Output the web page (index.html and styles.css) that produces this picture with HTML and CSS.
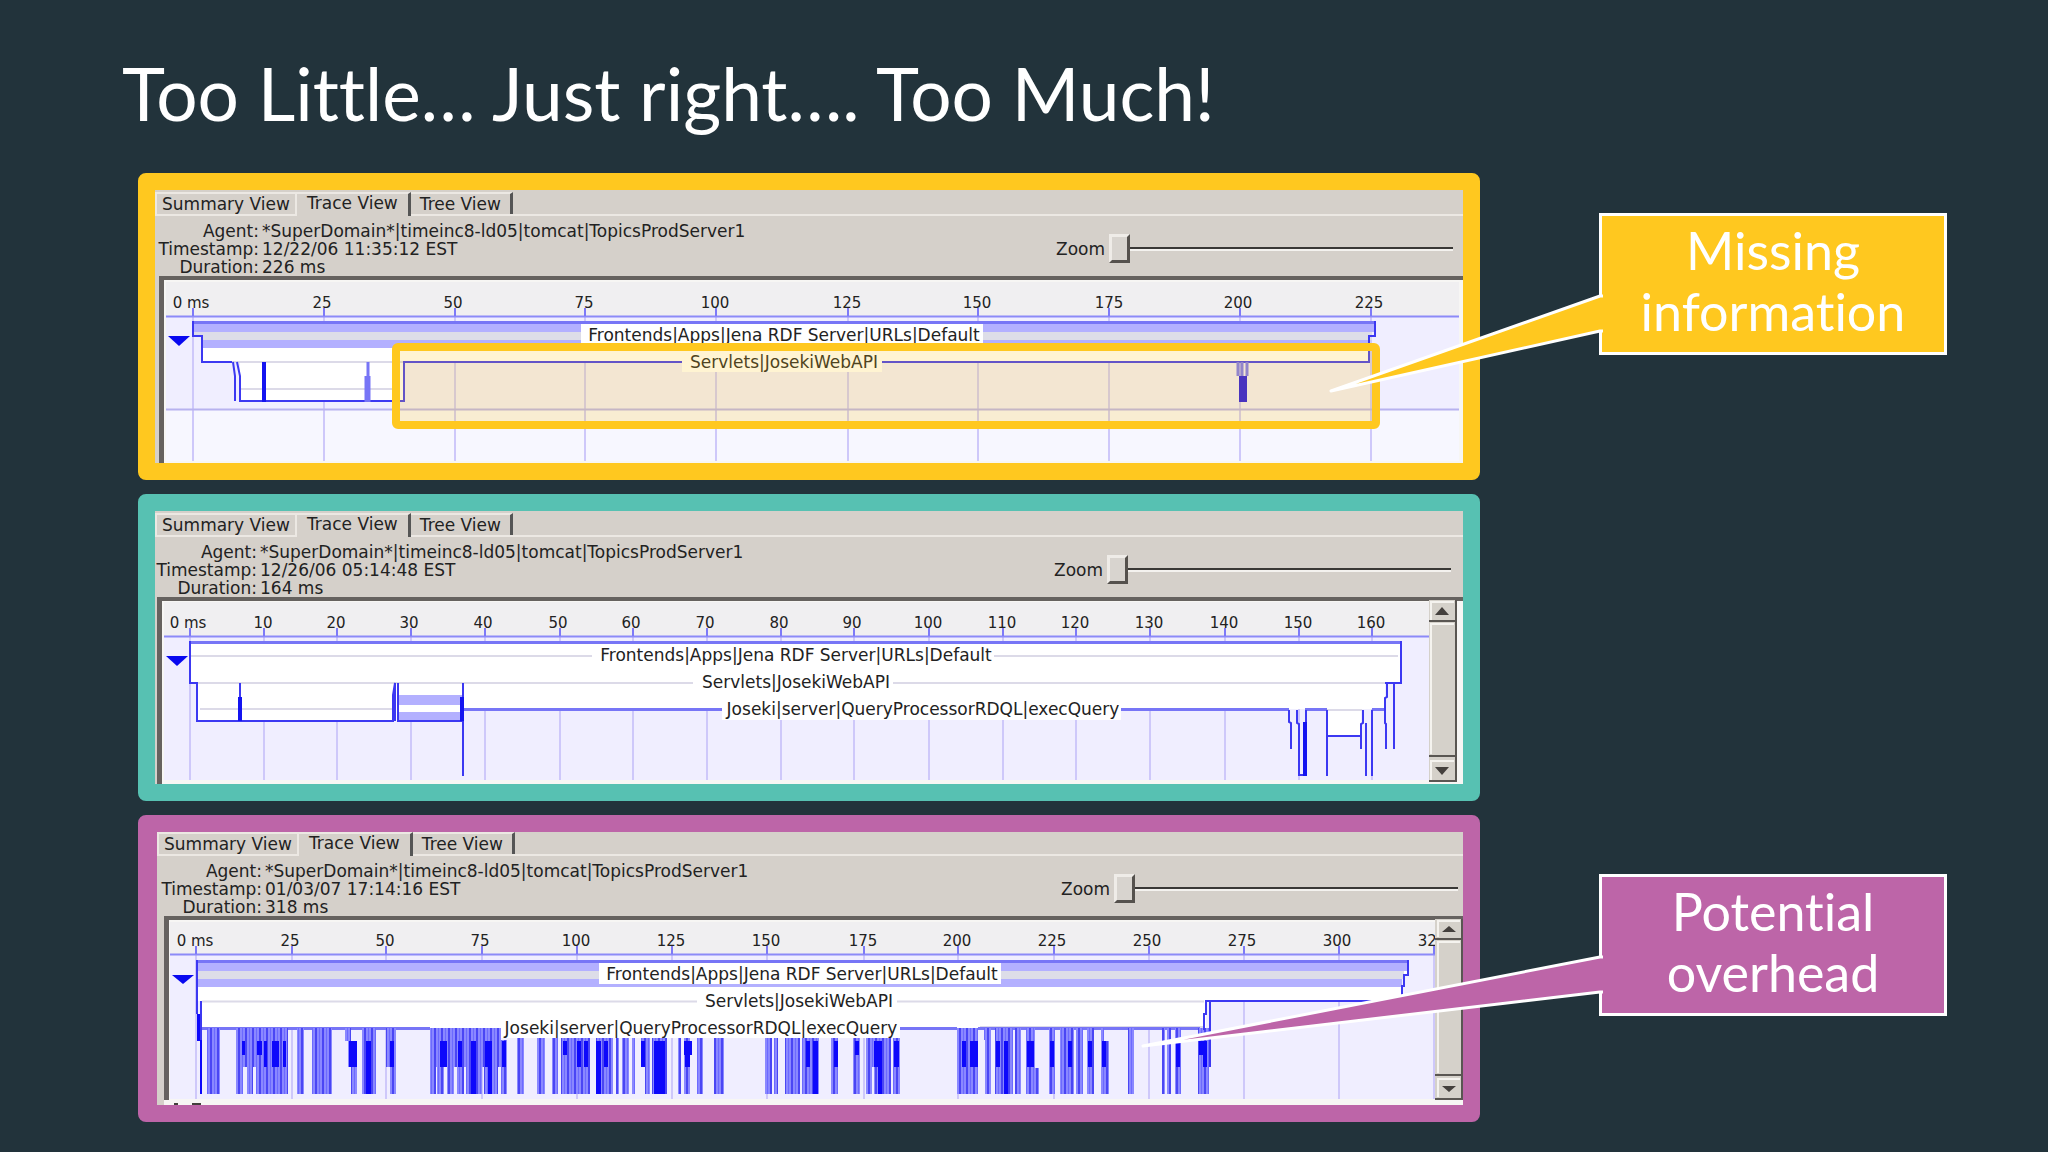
FILE: index.html
```html
<!DOCTYPE html>
<html lang="en">
<head>
<meta charset="utf-8">
<title>Too Little… Just right…. Too Much!</title>
<link rel="stylesheet" href="styles.css">
</head>
<body>
<header class="slide-header"><h1>Too Little… Just right…. Too Much!</h1></header>
<main class="slide">

<section class="panel panel-yellow">
  <div class="tabs" role="tablist">
    <button class="tab" role="tab">Summary View</button>
    <button class="tab tab-active" role="tab" aria-selected="true">Trace View</button>
    <button class="tab tab-last" role="tab">Tree View</button>
  </div>
  <div class="details">
    <dl class="info">
      <dt>Agent:</dt><dd>*SuperDomain*|timeinc8-ld05|tomcat|TopicsProdServer1</dd>
      <dt>Timestamp:</dt><dd>12/22/06 11:35:12 EST</dd>
      <dt>Duration:</dt><dd>226 ms</dd>
    </dl>
    <div class="zoom"><label for="zoom1">Zoom</label><input id="zoom1" type="range" min="0" max="100" value="0"></div>
  </div>
  <svg class="chart" viewBox="159 276 1304 187" role="img" aria-label="Trace with missing information">
    <rect class="shadow" x="159" y="276" width="1304" height="187"/>
    <rect class="edge" x="164" y="280" width="1299" height="183"/>
    <rect class="axis-bg" x="166" y="282" width="1293" height="34"/>
    <rect class="lane" x="166" y="317" width="1293" height="92"/>
    <rect class="below" x="166" y="409" width="1293" height="52"/>
    <path class="grid" d="M193 317V461M324 317V461M455 317V461M585 317V461M716 317V461M848 317V461M978 317V461M1109 317V461M1240 317V461M1371 317V461"/>
    <path class="rule" d="M166 409.500H1459"/>
    <path class="white" d="M202 336H1369V362H404V401H240V362H202z"/>
    <rect class="band" x="193" y="322" width="1182" height="10"/>
    <path class="grey" d="M193 332H1372V340H202V336H193z"/>
    <rect class="band" x="202" y="340" width="1167" height="8"/>
    <path class="faint" d="M240 389H400M202 362H404"/>
    <path class="mid" d="M193 322.500H1375"/>
    <path class="blue" d="M193 321V336H202V362H232M1375 321V336H1369V362H403M404 362V401H240V376L237 362M233 362L235 376V401"/>
    <path class="blue thick" d="M264 362V402"/>
    <path class="mid" d="M368 362V376M366 376V402M369 376V402"/>
    <path class="mid" d="M1238 362V376M1247 362V376M1242 362V376"/>
    <rect class="solid" x="1239" y="376" width="8" height="26"/>
    <path class="axis" d="M166 316.500H1459"/>
    <path class="tick" d="M193 308V316M324 308V316M455 308V316M585 308V316M716 308V316M848 308V316M978 308V316M1109 308V316M1240 308V316M1371 308V316"/>
    <path class="marker" d="M168 336H190L179 346z"/>
    <rect class="white" x="581" y="324" width="402" height="19"/>
    <rect class="white" x="682" y="355" width="200" height="17"/>
    <g class="ticks">
      <text x="191" y="308">0 ms</text><text x="322" y="308">25</text><text x="453" y="308">50</text><text x="584" y="308">75</text><text x="715" y="308">100</text><text x="847" y="308">125</text><text x="977" y="308">150</text><text x="1109" y="308">175</text><text x="1238" y="308">200</text><text x="1369" y="308">225</text>
    </g>
    <g class="labels">
      <text x="784" y="341">Frontends|Apps|Jena RDF Server|URLs|Default</text>
      <text x="784" y="368">Servlets|JosekiWebAPI</text>
    </g>
    <rect class="highlight" x="396" y="347" width="980" height="78" rx="2"/>
  </svg>
</section>

<aside class="callout callout-yellow">
  <svg class="tail" width="284" height="190" viewBox="0 0 284 190" aria-hidden="true"><path d="M284 83H281L12 178L281 118H284"/></svg>
  <p>Missing information</p>
</aside>

<section class="panel panel-teal">
  <div class="tabs" role="tablist">
    <button class="tab" role="tab">Summary View</button>
    <button class="tab tab-active" role="tab" aria-selected="true">Trace View</button>
    <button class="tab tab-last" role="tab">Tree View</button>
  </div>
  <div class="details">
    <dl class="info">
      <dt>Agent:</dt><dd>*SuperDomain*|timeinc8-ld05|tomcat|TopicsProdServer1</dd>
      <dt>Timestamp:</dt><dd>12/26/06 05:14:48 EST</dd>
      <dt>Duration:</dt><dd>164 ms</dd>
    </dl>
    <div class="zoom"><label for="zoom2">Zoom</label><input id="zoom2" type="range" min="0" max="100" value="0"></div>
  </div>
  <svg class="chart" viewBox="157 597 1306 187" role="img" aria-label="Trace with the right level of detail">
    <rect class="shadow" x="157" y="597" width="1306" height="187"/>
    <rect class="edge" x="162" y="601" width="1301" height="183"/>
    <rect class="axis-bg" x="164" y="602" width="1265" height="34"/>
    <rect class="lane" x="164" y="637" width="1265" height="143"/>
    <path class="grid" d="M190 637V780M264 637V780M337 637V780M411 637V780M485 637V780M560 637V780M633 637V780M707 637V780M781 637V780M854 637V780M929 637V780M1003 637V780M1076 637V780M1150 637V780M1225 637V780M1299 637V780M1372 637V780"/>
    <path class="white" d="M190 642H1401V683H1385V709H463V721H197V683H190z"/>
    <rect class="white" x="1327" y="709" width="34" height="27"/>
    <rect class="band" x="398" y="695" width="65" height="10"/>
    <rect class="band" x="398" y="712" width="65" height="8"/>
    <path class="faint" d="M191 656H1398M191 683H1385M200 709H392M1327 710H1362"/>
    <path class="mid" d="M190 642.500H1401M463 709.500H1289M1305 709.500H1327M1372 709.500H1385"/>
    <path class="blue" d="M190 641V683H197V721H393V695L395 683V721M398 683V721H463M240 683V721M463 683V776M1401 641V683H1385M1289 710V722L1291 723V749M1297 710V723L1299 724V775H1306V710M1327 710V776M1327 736H1361M1363 710V723L1361 724V749M1366 723V776M1372 710V776M1387 683V697L1385 698V723L1386 724V749M1394 683V749"/>
    <path class="blue thick" d="M240 697V721M462 697V721M1305 722V776"/>
    <path class="axis" d="M164 636.500H1429"/>
    <path class="tick" d="M190 628V636M264 628V636M337 628V636M411 628V636M485 628V636M560 628V636M633 628V636M707 628V636M781 628V636M854 628V636M929 628V636M1003 628V636M1076 628V636M1150 628V636M1225 628V636M1299 628V636M1372 628V636"/>
    <path class="marker" d="M166 656H188L177 666z"/>
    <rect class="white" x="592" y="647" width="402" height="18"/>
    <rect class="white" x="693" y="675" width="200" height="17"/>
    <rect class="white" x="722" y="700" width="399" height="20"/>
    <g class="ticks">
      <text x="188" y="628">0 ms</text><text x="263" y="628">10</text><text x="336" y="628">20</text><text x="409" y="628">30</text><text x="483" y="628">40</text><text x="558" y="628">50</text><text x="631" y="628">60</text><text x="705" y="628">70</text><text x="779" y="628">80</text><text x="852" y="628">90</text><text x="928" y="628">100</text><text x="1002" y="628">110</text><text x="1075" y="628">120</text><text x="1149" y="628">130</text><text x="1224" y="628">140</text><text x="1298" y="628">150</text><text x="1371" y="628">160</text>
    </g>
    <g class="labels">
      <text x="796" y="661">Frontends|Apps|Jena RDF Server|URLs|Default</text>
      <text x="796" y="688">Servlets|JosekiWebAPI</text>
      <text x="923" y="715">Joseki|server|QueryProcessorRDQL|execQuery</text>
    </g>
    <rect class="face" x="1429" y="600" width="28" height="182"/>
    <path class="bevel-light" d="M1431 620V602H1454M1431 754V624H1454M1431 780V761H1454"/>
    <path class="bevel-dark" d="M1429 621H1455M1429 756H1455M1429 781H1455M1456 600V782"/>
    <path class="arrow" d="M1435 615H1449L1442 607zM1435 767H1449L1442 775z"/>
  </svg>
</section>

<section class="panel panel-purple">
  <div class="tabs" role="tablist">
    <button class="tab" role="tab">Summary View</button>
    <button class="tab tab-active" role="tab" aria-selected="true">Trace View</button>
    <button class="tab tab-last" role="tab">Tree View</button>
  </div>
  <div class="details">
    <dl class="info">
      <dt>Agent:</dt><dd>*SuperDomain*|timeinc8-ld05|tomcat|TopicsProdServer1</dd>
      <dt>Timestamp:</dt><dd>01/03/07 17:14:16 EST</dd>
      <dt>Duration:</dt><dd>318 ms</dd>
    </dl>
    <div class="zoom"><label for="zoom3">Zoom</label><input id="zoom3" type="range" min="0" max="100" value="0"></div>
  </div>
  <svg class="chart" viewBox="164 916 1299 189" role="img" aria-label="Trace with potential overhead">
    <defs>
      <pattern id="calls" width="7" height="8" patternUnits="userSpaceOnUse">
        <rect width="7" height="8" fill="#8a88ff"/><rect width="2" height="8" fill="#4a46f4"/><rect x="4" width="1" height="8" fill="#6c6aff"/>
      </pattern>
    </defs>
    <rect class="shadow" x="164" y="916" width="1299" height="184"/>
    <rect class="edge" x="164" y="1100" width="1299" height="5"/>
    <rect class="edge" x="169" y="920" width="1267" height="181"/>
    <rect class="axis-bg" x="170" y="922" width="1265" height="32"/>
    <rect class="lane" x="170" y="955" width="1265" height="144"/>
    <path class="grid" d="M196 955V1099M292 955V1099M386 955V1099M482 955V1099M577 955V1099M672 955V1099M767 955V1099M864 955V1099M958 955V1099M1054 955V1099M1149 955V1099M1244 955V1099M1339 955V1099M1434 955V1099"/>
    <path class="white" d="M197 961H1408V975H1402V1001H1206V1028H202V1001H197z"/>
    <rect class="band" x="197" y="961" width="1211" height="10"/>
    <rect class="grey" x="197" y="971" width="1207" height="8"/>
    <rect class="band" x="197" y="979" width="1205" height="8"/>
    <path class="faint" d="M202 1001.500H1204M980 1027H1204"/>
    <path class="mid" d="M197 961.500H1408M202 1028.500H430M899 1028.500H957M978 1028.500H1200"/>
    <path fill="url(#calls)" d="M207 1028h13v66h-13zM236 1028h52v66h-32v-27h-3v27h-6v-27h-4v27h-7zM297 1028h7v66h-7zM312 1028h20v66h-20zM345 1028h6v13h6v53h-6v-27h-3v-26h-3zM362 1028h14v66h-14zM386 1028h10v66h-6v-27h-4zM430 1028h71v12h6v54h-6v-27h-3v27h-14v-27h-2v27h-6v-27h-3v27h-7v-27h-2v27h-7v-27h-3v27h-7v-27h-3v27h-7v-27h-1v27h-6zM517 1038h7v56h-7zM537 1038h8v56h-8zM552 1038h6v56h-6zM561 1038h29v56h-29zM596 1038h17v56h-17zM616 1038h3v56h-3zM622 1038h7v56h-7zM632 1038h3v56h-3zM641 1038h9v56h-5v-27h-4zM652 1038h15v56h-15zM678 1038h3v56h-3zM684 1038h6v56h-6zM697 1038h6v56h-6zM714 1038h10v56h-10zM765 1038h7v56h-7zM774 1038h4v56h-4zM785 1038h15v56h-15zM802 1038h17v56h-17zM831 1038h7v56h-7zM853 1038h7v56h-7zM866 1038h25v56h-17v-27h-2v27h-6zM893 1038h7v56h-7zM957 1028h21v66h-21zM984 1028h7v66h-6v-54h-1zM995 1028h18v66h-18zM1015 1028h6v66h-6zM1026 1028h9v40h4v26h-13zM1049 1028h6v66h-6zM1060 1028h14v66h-14zM1076 1028h7v66h-7zM1087 1028h7v66h-7zM1101 1028h3v13h5v53h-8zM1128 1028h6v66h-6zM1162 1028h3v66h-3zM1167 1028h4v66h-4zM1175 1028h6v66h-6zM1198 1028h11v66h-11z"/>
    <path class="call" d="M197 1014h5v27h-5zM200 1041h2v53h-2zM242 1041h3v14h-3zM257 1041h5v14h-5zM264 1041h3v26h-3zM272 1041h7v26h-7zM283 1041h3v26h-3zM349 1041h8v26h-8zM366 1041h5v53h-5zM390 1041h4v26h-4zM440 1041h7v26h-7zM458 1041h4v26h-4zM471 1041h5v53h-5zM485 1041h7v26h-7zM488 1067h4v27h-4zM502 1041h4v26h-4zM563 1041h4v14h-4zM577 1041h4v26h-4zM584 1041h4v26h-4zM596 1041h5v53h-5zM604 1041h4v26h-4zM641 1041h4v26h-4zM654 1041h11v53h-11zM684 1041h8v14h-8zM685 1055h5v12h-5zM806 1041h4v26h-4zM813 1041h5v53h-5zM834 1041h4v26h-4zM855 1041h4v14h-4zM874 1041h8v26h-8zM878 1067h4v27h-4zM894 1041h5v26h-5zM962 1041h4v26h-4zM970 1041h8v26h-8zM996 1041h4v26h-4zM1004 1041h4v53h-4zM1027 1041h7v26h-7zM1050 1041h4v26h-4zM1068 1041h4v26h-4zM1088 1041h4v26h-4zM1102 1041h4v26h-4zM1176 1041h4v26h-4zM1199 1041h8v14h-8zM1203 1055h4v12h-4z"/>
    <path class="blue" d="M197 960V1014M201 1001V1040M1408 960V975H1404V986H1402V1001H1206V1014H1204V1030M1210 1001V1067"/>
    <path class="axis" d="M170 954.500H1435"/>
    <path class="tick" d="M196 946V954M292 946V954M386 946V954M482 946V954M577 946V954M672 946V954M767 946V954M864 946V954M958 946V954M1054 946V954M1149 946V954M1244 946V954M1339 946V954M1434 946V954"/>
    <path class="marker" d="M172 975H194L183 984z"/>
    <rect class="white" x="599" y="963" width="402" height="21"/>
    <rect class="white" x="697" y="994" width="200" height="17"/>
    <rect class="white" x="501" y="1020" width="399" height="18"/>
    <g class="ticks">
      <text x="195" y="946">0 ms</text><text x="290" y="946">25</text><text x="385" y="946">50</text><text x="480" y="946">75</text><text x="576" y="946">100</text><text x="671" y="946">125</text><text x="766" y="946">150</text><text x="863" y="946">175</text><text x="957" y="946">200</text><text x="1052" y="946">225</text><text x="1147" y="946">250</text><text x="1242" y="946">275</text><text x="1337" y="946">300</text><text x="1432" y="946">325</text>
    </g>
    <g class="labels">
      <text x="802" y="980">Frontends|Apps|Jena RDF Server|URLs|Default</text>
      <text x="799" y="1007">Servlets|JosekiWebAPI</text>
      <text x="701" y="1034">Joseki|server|QueryProcessorRDQL|execQuery</text>
    </g>
    <path class="arrow" d="M174 1103h4v2h-4zM192 1103h9v2h-9z"/>
    <rect class="face" x="1435" y="919" width="28" height="181"/>
    <path class="bevel-light" d="M1438 937V921H1460M1438 1073V942H1460M1438 1097V1079H1460"/>
    <path class="bevel-dark" d="M1435 939H1462M1435 1075H1462M1435 1099H1462M1462 919V1100"/>
    <path class="arrow" d="M1442 932H1456L1449 926zM1442 1086H1456L1449 1092z"/>
  </svg>
</section>

<aside class="callout callout-purple">
  <svg class="tail tail-long" width="474" height="190" viewBox="0 0 474 190" aria-hidden="true"><path d="M474 83H471L14 172L471 118H474"/></svg>
  <p>Potential overhead</p>
</aside>
</main>
</body>
</html>
```
FILE: styles.css
```css
* { box-sizing: border-box; }
body { margin: 0; background: #22333b; color: #fff; font-family: Lato, sans-serif; font-variant-ligatures: none; }
.slide-header { padding: 50px 122px 37px; }
h1 { margin: 0; font-size: 73px; line-height: 86px; font-weight: 400; }
.slide {
  display: grid;
  grid-template-columns: 1342fr 348fr;
  column-gap: 119px;
  row-gap: 14px;
  align-items: start;
  padding: 0 101px 30px 138px;
}

/* Trace windows */
.panel {
  --accent: #ffc81f;
  --inset: 4px;
  --label-width: 104px;
  --end: 10px;
  --tabs-height: 26px;
  grid-column: 1;
  border: 17px solid var(--accent);
  border-radius: 8px;
  background: #d5d0ca;
  color: #222;
  font: 17px/18px "DejaVu Sans", sans-serif;
}
.panel-teal { --accent: #57c1b2; --inset: 2px; --label-width: 102px; --end: 12px; }
.panel-purple { --accent: #bd65a8; --inset: 7px; --label-width: 105px; --end: 5px; --tabs-height: 24px; border-left-width: 19px; }
.tabs {
  display: flex;
  align-items: flex-end;
  height: var(--tabs-height);
  border-bottom: 2px solid #ece8e3;
}
.tab {
  height: 22px;
  padding: 0 5px;
  border: solid #ece8e3;
  border-width: 2px 2px 0;
  background: none;
  color: inherit;
  font: inherit;
  white-space: nowrap;
}
.tab-active {
  height: 24px;
  margin-bottom: -2px;
  padding: 0 10px 4px;
  border-width: 2px 3px 0 0;
  border-right-color: #555;
  background: #d5d0ca;
}
.tab-last { padding: 0 9px; border-width: 2px 3px 0 0; border-right-color: #555; }
.details {
  display: flex;
  justify-content: space-between;
  align-items: center;
  padding: 6px var(--end) 0 0;
}
.info {
  display: grid;
  grid-template-columns: var(--label-width) auto;
  column-gap: 3px;
  margin: 0;
  white-space: nowrap;
}
dt { text-align: right; }
dd { margin: 0; }
.zoom { display: flex; align-items: center; gap: 4px; }
input[type="range"] {
  -webkit-appearance: none;
  appearance: none;
  width: 344px;
  height: 29px;
  margin: 0;
  background: none;
}
input[type="range"]::-webkit-slider-runnable-track {
  height: 4px;
  border-bottom: 2px solid #f4f2ef;
  background: #3a3836;
}
input[type="range"]::-webkit-slider-thumb {
  -webkit-appearance: none;
  width: 21px;
  height: 29px;
  margin-top: -13px;
  border: 3px solid;
  border-color: #efece8 #55514d #55514d #efece8;
  background: #d8d4cf;
}
.chart {
  display: block;
  width: calc(100% - var(--inset));
  height: auto;
  margin-left: var(--inset);
}

/* Chart parts */
.chart path { stroke-width: 2; }
.shadow { fill: #66625f; }
.edge { fill: #f7f6f4; }
.axis-bg { fill: #f0eff1; }
.lane { fill: #f0eeff; }
.below { fill: #f7f7ff; }
.white { fill: #fff; }
.band { fill: #b3b0ff; }
.grey { fill: #dddde8; }
.solid { fill: #1c10e8; }
.grid { stroke: #cec8fa; }
.rule { stroke: #b7b2ef; }
.faint { fill: none; stroke: #dcdae8; }
.mid { fill: none; stroke: #7775f6; }
.chart .mid { stroke-width: 3; }
.blue { fill: none; stroke: #3c38f2; }
.chart .thick { stroke-width: 4; stroke: #1414f0; }
.axis { stroke: #8c8af8; }
.tick { stroke: #7d7af8; }
.marker { fill: #0808f0; }
.call { fill: #0d08fb; }
.face { fill: #d5d1ca; }
.bevel-light { fill: none; stroke: #f5f3ef; }
.bevel-dark { fill: none; stroke: #5a5652; }
.arrow { fill: #44403d; }
.highlight { fill: rgba(255, 200, 31, 0.2); stroke: #ffc81f; stroke-width: 8; }
.ticks, .labels { fill: #222; text-anchor: middle; }
.ticks { font-size: 15px; }
.labels { font-size: 17px; }

/* Callouts */
.callout {
  position: relative;
  grid-column: 2;
  padding: 4px 20px 10px;
  border: 3px solid #fff;
  font-size: 52px;
  line-height: 61px;
  text-align: center;
}
.callout p { margin: 0; }
.callout-yellow { margin-top: 40px; background: #ffc81f; }
.callout-purple { margin-top: 59px; background: #bd65a8; }
.tail { position: absolute; top: -3px; left: -283px; stroke: #fff; stroke-width: 3; stroke-linejoin: round; fill: #ffc81f; }
.tail-long { left: -473px; fill: #bd65a8; }
```
